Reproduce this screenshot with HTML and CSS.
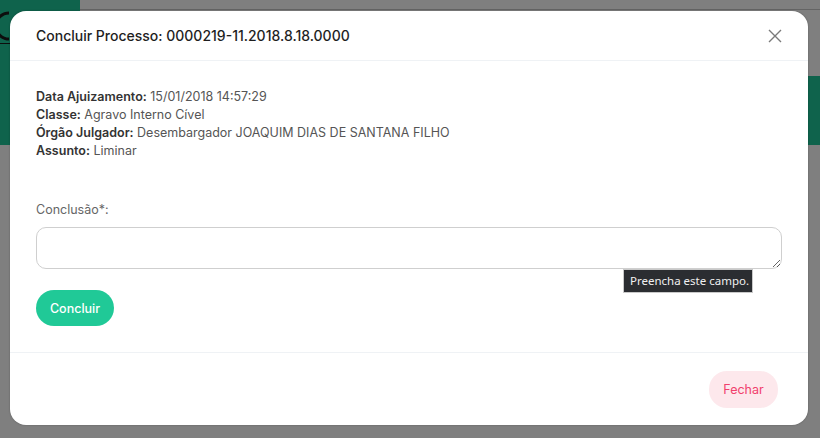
FILE: index.html
```html
<!DOCTYPE html>
<html lang="pt-BR">
<head>
<meta charset="utf-8">
<title>Concluir Processo</title>
<link rel="stylesheet" href="styles.css">
</head>
<body>
<div class="page">
  <div class="page-top">
    <div class="brand">
      <svg class="brand-logo" width="40" height="50" viewBox="0 0 40 50"><path d="M17 13 A13 13 0 1 0 17 39" stroke="#1a1a1a" stroke-width="3" fill="none"/><path d="M0 43.5 H30" stroke="#1a1a1a" stroke-width="1"/></svg>
    </div>
    <div class="topbar"></div>
  </div>
  <div class="band"></div>
</div>
<div class="overlay"></div>
<div class="modal">
  <div class="modal-header">
    <h2 class="modal-title">Concluir Processo: 0000219-11.2018.8.18.0000</h2>
    <button class="close" aria-label="Fechar">
      <svg width="14" height="14" viewBox="0 0 14 14"><path d="M1 1L13 13M13 1L1 13" stroke="#7a7a7a" stroke-width="1.4" fill="none"/></svg>
    </button>
  </div>
  <div class="modal-body">
    <div class="info">
      <div><b>Data Ajuizamento:</b> 15/01/2018 14:57:29</div>
      <div><b>Classe:</b> Agravo Interno Cível</div>
      <div><b>Órgão Julgador:</b> Desembargador JOAQUIM DIAS DE SANTANA FILHO</div>
      <div><b>Assunto:</b> Liminar</div>
    </div>
    <label class="field-label">Conclusão*:</label>
    <div class="field">
      <textarea class="textarea"></textarea>
      <div class="tooltip">Preencha este campo.</div>
    </div>
    <button class="btn-primary">Concluir</button>
  </div>
  <div class="modal-footer">
    <button class="btn-light">Fechar</button>
  </div>
</div>
</body>
</html>
```
FILE: styles.css
```css
* { box-sizing: border-box; }
html, body { margin: 0; padding: 0; }
body {
  width: 820px;
  height: 438px;
  overflow: hidden;
  background: #ffffff;
  font-family: "Inter", "Noto Sans", sans-serif;
  position: relative;
}
.page { width: 820px; height: 438px; }
.page-top { display: flex; height: 76px; }
.brand {
  width: 80px;
  height: 76px;
  background: #1fc698;
  overflow: hidden;
  display: flex;
  align-items: flex-start;
}
.brand-logo { display: block; margin-left: -8px; }
.topbar { flex: 1; height: 10px; border-bottom: 1px solid #c8c8c8; }
.band { height: 69px; background: #1fc698; }
.overlay {
  position: absolute;
  inset: 0;
  background: rgba(0, 0, 0, 0.5);
}
.modal {
  position: absolute;
  left: 10px;
  top: 11px;
  width: 798px;
  height: 414px;
  background: #fff;
  border-radius: 16px;
  box-shadow: 0 0 2px rgba(0,0,0,0.3);
  display: flex;
  flex-direction: column;
  color: #3f4254;
}
.modal-header {
  height: 50px;
  border-bottom: 1px solid #eff2f5;
  display: flex;
  align-items: center;
  justify-content: space-between;
  padding: 0 26px 0 26px;
}
.modal-title {
  margin: 0;
  font-size: 14px;
  font-weight: 500;
  color: #1e1e1e;
}
.close {
  border: 0;
  background: none;
  padding: 0;
  width: 14px;
  height: 14px;
  display: flex;
}
.modal-body {
  padding: 27px 26px 26px 26px;
  border-bottom: 1px solid #eff2f5;
  display: flex;
  flex-direction: column;
  align-items: flex-start;
}
.info { font-size: 12.5px; line-height: 18px; color: #555; }
.info b { font-weight: 600; color: #333; }
.field-label {
  margin-top: 41px;
  font-size: 12.5px;
  line-height: 18px;
  color: #666;
}
.field { position: relative; width: 100%; margin-top: 8px; }
.textarea {
  display: block;
  width: 100%;
  height: 42px;
  border: 1px solid #cfcfcf;
  border-radius: 10px;
  resize: vertical;
  font-family: inherit;
}
.tooltip {
  position: absolute;
  left: 587px;
  top: 42px;
  width: 130px;
  height: 24px;
  background: #2b2d31;
  border: 1px solid #c9c9c9;
  color: #f0f0f0;
  font-family: "Noto Sans", "DejaVu Sans", sans-serif;
  font-size: 11.5px;
  line-height: 22px;
  padding-left: 6px;
  white-space: nowrap;
}
.btn-primary {
  margin-top: 21px;
  height: 36px;
  width: 78px;
  border: 0;
  border-radius: 18px;
  background: #20c997;
  color: #fff;
  font-family: inherit;
  font-size: 12.5px;
  font-weight: 500;
}
.modal-footer {
  flex: 1;
  display: flex;
  justify-content: flex-end;
  align-items: center;
  padding: 0 30px 0 0;
}
.btn-light {
  height: 37px;
  width: 69px;
  border: 0;
  border-radius: 18px;
  background: #fde8ec;
  color: #f1416c;
  font-family: inherit;
  font-size: 12.5px;
}
```
